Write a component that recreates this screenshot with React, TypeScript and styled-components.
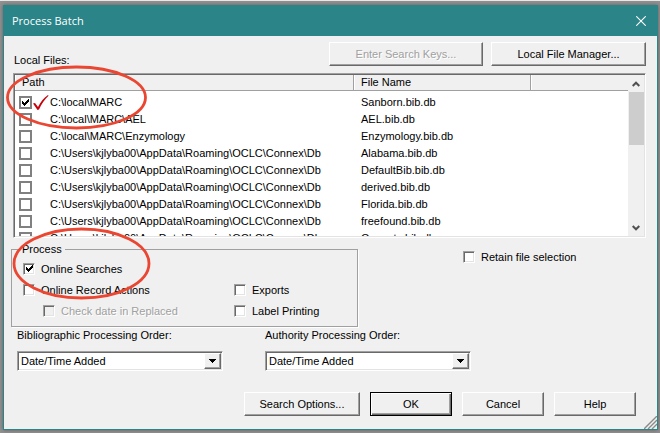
import React from "react";
import styled, { createGlobalStyle, css } from "styled-components";

const GlobalStyle = createGlobalStyle`
  * { box-sizing: border-box; }
  body {
    margin: 0;
    min-height: 100vh;
    background: #919191;
    font-family: "Liberation Sans", Arial, sans-serif;
    font-size: 11px;
    line-height: 16px;
    color: #000;
  }
  button, select, input { font: inherit; color: inherit; margin: 0; }
`;

const raised = css`
  border: 1px solid;
  border-color: #fff #696969 #696969 #fff;
  box-shadow: inset -1px -1px #a0a0a0;
`;

const sunken = css`
  border: 1px solid;
  border-color: #a0a0a0 #fff #fff #a0a0a0;
  box-shadow: inset 1px 1px #696969, inset -1px -1px #e3e3e3;
`;

const Desktop = styled.div`
  padding: 5px 2px 3px 3px;
  box-shadow: inset 0 1px #e8e8e8;
`;

const Dialog = styled.main`
  position: relative;
  background: #f0f0f0;
  border: 1px solid #2a8488;
  border-top: 0;
  box-shadow: 0 0 4px rgba(0, 0, 0, 0.35);
`;

const TitleBar = styled.header`
  display: flex;
  align-items: center;
  justify-content: space-between;
  height: 31px;
  padding: 0 10px 0 8px;
  background: #2a8488;
  color: #fff;
`;

const Title = styled.h1`
  margin: 0;
  font: 400 11px/16px "Open Sans", "Noto Sans", sans-serif;
`;

const CloseButton = styled.button`
  display: grid;
  place-items: center;
  width: 12px;
  height: 16px;
  padding: 0;
  border: 0;
  background: none;
  color: #fff;
`;

const Content = styled.div`
  padding: 6px 11px 13px 9px;
`;

const TopRow = styled.div`
  display: flex;
  align-items: flex-end;
  gap: 8px;
  height: 24px;
`;

const ListLabel = styled.h2`
  flex: 1;
  margin: 0;
  padding-left: 1px;
  font-size: 11px;
  font-weight: 400;
  line-height: 12px;
`;

const PushButton = styled.button<{ $width: number; $primary?: boolean }>`
  ${raised}
  width: ${(p) => p.$width}px;
  height: 24px;
  padding: 0;
  background: #f0f0f0;
  ${(p) =>
    p.$primary &&
    css`
      border-color: #000;
      box-shadow: inset 1px 1px #fff, inset -1px -1px #696969, inset -2px -2px #a0a0a0;
    `}
  &:disabled {
    color: #a0a0a0;
    text-shadow: 1px 1px #fff;
  }
`;

const ListBox = styled.section`
  ${sunken}
  display: flex;
  height: 165px;
  margin-top: 7px;
  padding: 1px;
  background: #fff;
`;

const ListViewport = styled.div`
  flex: 1;
  min-width: 0;
  overflow: hidden;
`;

const FileTable = styled.table`
  width: 100%;
  table-layout: fixed;
  border-collapse: separate;
  border-spacing: 0;
`;

const HeadCell = styled.th<{ $width?: number }>`
  width: ${(p) => (p.$width ? `${p.$width}px` : "auto")};
  height: 16px;
  padding: 0 0 0 7px;
  background: #f0f0f0;
  border-right: 1px solid #a0a0a0;
  border-bottom: 1px solid #a0a0a0;
  box-shadow: inset 1px 0 #fff;
  font-weight: 400;
  line-height: 15px;
  text-align: left;
  &:last-child { border-right: 0; }
`;

const FileRow = styled.tr<{ $first?: boolean }>`
  td {
    height: ${(p) => (p.$first ? 20 : 17)}px;
    padding: ${(p) => (p.$first ? 3 : 0)}px 0 0 7px;
    line-height: 17px;
    white-space: nowrap;
  }
`;

const PathLabel = styled.label`
  display: flex;
  align-items: center;
  height: 17px;
  margin-left: -3px;
`;

const MarkSlot = styled.span`
  display: grid;
  place-items: center;
  flex: none;
  width: 18px;
  height: 17px;
`;

const BoxWrap = styled.span`
  display: inline-grid;
  flex: none;
  > * { grid-area: 1 / 1; place-self: center; }
  svg { pointer-events: none; }
`;

const Box = styled.input<{ $flat?: boolean }>`
  appearance: none;
  width: ${(p) => (p.$flat ? 13 : 12)}px;
  height: ${(p) => (p.$flat ? 13 : 12)}px;
  background: #fff;
  ${(p) => (p.$flat ? css`border: 2px solid #808080;` : sunken)}
  &:disabled { background: #f0f0f0; }
`;

const Scrollbar = styled.div`
  display: flex;
  flex-direction: column;
  width: 16px;
  background: #f0f0f0;
`;

const ScrollButton = styled.button`
  display: grid;
  place-items: center;
  height: 17px;
  padding: 0;
  border: 0;
  background: none;
  color: #505050;
`;

const ScrollTrack = styled.div`
  flex: 1;
`;

const ScrollThumb = styled.div`
  width: 15px;
  height: 53px;
  margin-left: 1px;
  background: #cdcdcd;
`;

const Options = styled.div`
  display: flex;
  align-items: flex-start;
  gap: 105px;
  margin: 3px 0 0 -2px;
`;

const Group = styled.fieldset`
  display: grid;
  grid-template-columns: 211px 1fr;
  grid-auto-rows: 21px;
  width: 347px;
  min-width: 0;
  margin: 0;
  padding: 1px 0 5px 11px;
  border: 1px solid #a0a0a0;
  box-shadow: 1px 1px #fff;
`;

const Legend = styled.legend`
  margin-left: -4px;
  padding: 0 3px;
  line-height: 16px;
`;

const Check = styled.label<{ $indent?: boolean; $column?: number; $off?: boolean }>`
  display: flex;
  align-items: center;
  gap: 6px;
  margin-left: ${(p) => (p.$indent ? 20 : 0)}px;
  grid-column: ${(p) => p.$column ?? "auto"};
  ${(p) => p.$off && css`color: #a0a0a0; text-shadow: 1px 1px #fff;`}
`;

const RetainSlot = styled.div`
  padding-top: 8px;
`;

const Orders = styled.div`
  display: flex;
  gap: 42px;
  padding-left: 4px;
`;

const Field = styled.div`
  display: grid;
  gap: 8px;
  width: 206px;
`;

const SelectFrame = styled.div`
  ${sunken}
  position: relative;
  height: 20px;
  background: #fff;
`;

const Select = styled.select`
  appearance: none;
  display: block;
  width: 100%;
  height: 18px;
  padding: 0 20px 0 3px;
  border: 0;
  background: none;
`;

const DropArrow = styled.span`
  ${raised}
  position: absolute;
  top: 1px;
  right: 1px;
  display: grid;
  place-items: center;
  width: 17px;
  height: 16px;
  background: #f0f0f0;
  pointer-events: none;
`;

const Actions = styled.footer`
  display: flex;
  justify-content: flex-end;
  gap: 10px;
  margin: 21px 10px 0 0;
`;

const Grip = styled.svg`
  position: absolute;
  right: 0;
  bottom: 0;
`;

const Annotation = styled.svg`
  position: absolute;
  top: 0;
  left: 0;
  overflow: visible;
  pointer-events: none;
`;

type CheckboxProps = { flat?: boolean; checked?: boolean; disabled?: boolean };

function Checkbox({ flat, checked, disabled }: CheckboxProps) {
  const [on, setOn] = React.useState(!!checked);
  return (
    <BoxWrap>
      <Box type="checkbox" $flat={flat} checked={on} disabled={disabled} onChange={() => setOn(!on)} />
      {on && (
        <svg width="7" height="7" viewBox="0 0 7 7" shapeRendering="crispEdges">
          <path d="M0 2h1v1h1v1h1v-1h1v-1h1v-1h1v-1h1v3h-1v1h-1v1h-1v1h-1v1h-1v-1h-1v-1h-1z" fill="#000" />
        </svg>
      )}
    </BoxWrap>
  );
}

const appData = "C:\\Users\\kjlyba00\\AppData\\Roaming\\OCLC\\Connex\\Db";
const files = [
  { path: "C:\\local\\MARC", name: "Sanborn.bib.db", active: true },
  { path: "C:\\local\\MARC\\AEL", name: "AEL.bib.db" },
  { path: "C:\\local\\MARC\\Enzymology", name: "Enzymology.bib.db" },
  { path: appData, name: "Alabama.bib.db" },
  { path: appData, name: "DefaultBib.bib.db" },
  { path: appData, name: "derived.bib.db" },
  { path: appData, name: "Florida.bib.db" },
  { path: appData, name: "freefound.bib.db" },
  { path: appData, name: "Geosets.bib.db" },
];

function OrderField({ id, label }: { id: string; label: string }) {
  return (
    <Field>
      <label htmlFor={id}>{label}</label>
      <SelectFrame>
        <Select id={id}>
          <option>Date/Time Added</option>
        </Select>
        <DropArrow>
          <svg width="7" height="4" viewBox="0 0 7 4" shapeRendering="crispEdges">
            <path d="M0 0h7v1h-1v1h-1v1h-1v1h-1v-1h-1v-1h-1v-1h-1z" />
          </svg>
        </DropArrow>
      </SelectFrame>
    </Field>
  );
}

export default function App() {
  return (
    <>
      <GlobalStyle />
      <Desktop>
        <Dialog>
          <TitleBar>
            <Title>Process Batch</Title>
            <CloseButton aria-label="Close">
              <svg width="10" height="10" viewBox="0 0 10 10" fill="none" stroke="currentColor" strokeWidth="1.1">
                <path d="M0.3 0.3 9.7 9.7M9.7 0.3 0.3 9.7" />
              </svg>
            </CloseButton>
          </TitleBar>
          <Content>
            <TopRow>
              <ListLabel>Local Files:</ListLabel>
              <PushButton $width={154} disabled>Enter Search Keys...</PushButton>
              <PushButton $width={155}>Local File Manager...</PushButton>
            </TopRow>
            <ListBox aria-label="Local Files">
              <ListViewport>
                <FileTable>
                  <thead>
                    <tr>
                      <HeadCell $width={339}>Path</HeadCell>
                      <HeadCell $width={177}>File Name</HeadCell>
                      <HeadCell />
                    </tr>
                  </thead>
                  <tbody>
                    {files.map((f, i) => (
                      <FileRow key={f.name} $first={i === 0}>
                        <td>
                          <PathLabel>
                            <Checkbox flat checked={f.active} />
                            <MarkSlot>
                              {f.active && (
                                <svg width="16" height="16" viewBox="0 0 16 16" fill="#c8000c">
                                  <path d="M0 8.5 2 8 5 12C7.500 7 10.500 3 15 0L15.500 .8C11.500 4.500 8.500 9 6 14.500L4.500 15z" />
                                </svg>
                              )}
                            </MarkSlot>
                            {f.path}
                          </PathLabel>
                        </td>
                        <td>{f.name}</td>
                        <td />
                      </FileRow>
                    ))}
                  </tbody>
                </FileTable>
              </ListViewport>
              <Scrollbar>
                <ScrollButton aria-label="Scroll up">
                  <svg width="8" height="6" viewBox="0 0 8 6" fill="none" stroke="currentColor" strokeWidth="2">
                    <path d="M0.7 5 4 1.7 7.3 5" />
                  </svg>
                </ScrollButton>
                <ScrollTrack>
                  <ScrollThumb />
                </ScrollTrack>
                <ScrollButton aria-label="Scroll down">
                  <svg width="8" height="6" viewBox="0 0 8 6" fill="none" stroke="currentColor" strokeWidth="2">
                    <path d="M0.7 1 4 4.3 7.3 1" />
                  </svg>
                </ScrollButton>
              </Scrollbar>
            </ListBox>
            <Options>
              <Group>
                <Legend>Process</Legend>
                <Check $column={1}><Checkbox checked />Online Searches</Check>
                <Check $column={1}><Checkbox />Online Record Actions</Check>
                <Check $column={2}><Checkbox />Exports</Check>
                <Check $column={1} $indent $off><Checkbox disabled />Check date in Replaced</Check>
                <Check $column={2}><Checkbox />Label Printing</Check>
              </Group>
              <RetainSlot>
                <Check><Checkbox />Retain file selection</Check>
              </RetainSlot>
            </Options>
            <Orders>
              <OrderField id="bib-order" label="Bibliographic Processing Order:" />
              <OrderField id="auth-order" label="Authority Processing Order:" />
            </Orders>
            <Actions>
              <PushButton $width={116}>Search Options...</PushButton>
              <PushButton $width={82} $primary>OK</PushButton>
              <PushButton $width={82}>Cancel</PushButton>
              <PushButton $width={82}>Help</PushButton>
            </Actions>
          </Content>
          <Grip width="13" height="13" viewBox="0 0 13 13" stroke="#8a8a8a" strokeWidth="1.4">
            <path d="M0 13 13 0M4 13 13 4M8 13 13 8" />
          </Grip>
          <Annotation width="160" height="300" viewBox="0 0 160 300" fill="none" stroke="#ea4632" strokeWidth="2.8" aria-hidden="true">
            <ellipse cx="72.5" cy="92.5" rx="69" ry="30.5" />
            <ellipse cx="77.5" cy="258.5" rx="67.5" ry="34.5" />
          </Annotation>
        </Dialog>
      </Desktop>
    </>
  );
}
